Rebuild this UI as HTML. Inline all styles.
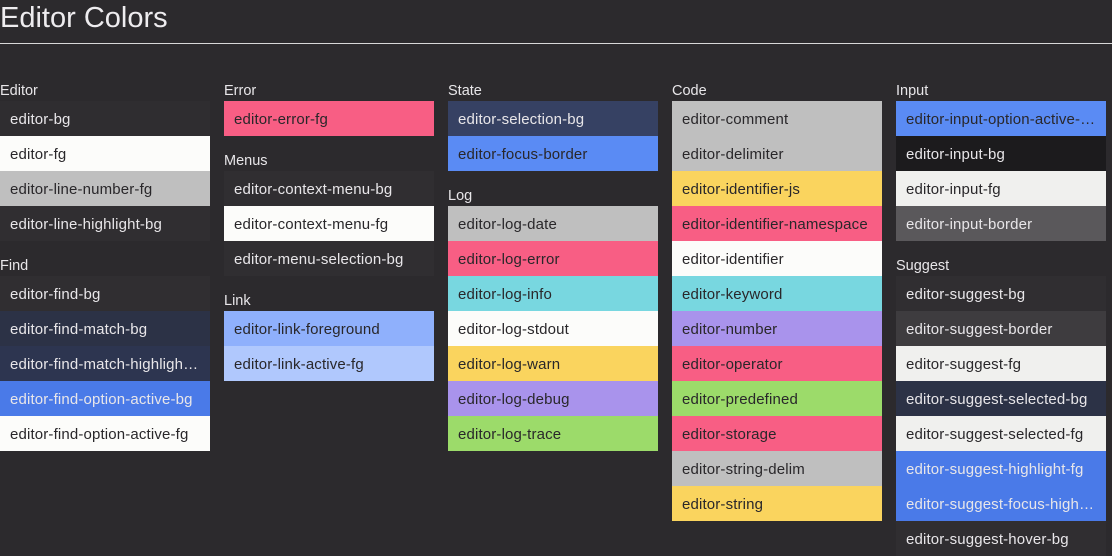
<!DOCTYPE html>
<html><head><style>
*{margin:0;padding:0;box-sizing:border-box}
body{width:1112px;height:556px;overflow:hidden;background:#2c2a2d;font-family:"Liberation Sans",sans-serif;color:#e8e6e9;position:relative}
h1{position:absolute;left:0;top:1px;font-weight:normal;font-size:29px;line-height:34px;color:#eeecef;letter-spacing:0}
.hr{position:absolute;left:0;top:43px;width:1112px;height:1px;background:#d8d8d8}
.col{position:absolute;top:77px;width:210px}
.h{height:24px;line-height:28px;font-size:14.5px;color:#e8e6e9}
.sec+.sec{margin-top:11px}
.r{height:35px;line-height:37px;padding-left:10px;padding-right:10px;font-size:15px;white-space:nowrap;overflow:hidden;text-overflow:ellipsis;letter-spacing:0.15px}
.d{color:#29272a}.l{color:#e8e6e9}
</style></head><body>
<h1>Editor Colors</h1><div class="hr"></div>

<div class="col" style="left:0">
<div class="sec"><div class="h">Editor</div>
<div class="r l" style="background:#2f2d30">editor-bg</div>
<div class="r d" style="background:#fcfcfa">editor-fg</div>
<div class="r d" style="background:#bfbfbf">editor-line-number-fg</div>
<div class="r l" style="background:#302e31">editor-line-highlight-bg</div></div>
<div class="sec"><div class="h">Find</div>
<div class="r l" style="background:#302e31">editor-find-bg</div>
<div class="r l" style="background:#2c3246">editor-find-match-bg</div>
<div class="r l" style="background:#2d3550">editor-find-match-highlight-bg</div>
<div class="r l" style="background:#4a7ae8">editor-find-option-active-bg</div>
<div class="r d" style="background:#fcfcfa">editor-find-option-active-fg</div></div>
</div>

<div class="col" style="left:224px">
<div class="sec"><div class="h">Error</div>
<div class="r d" style="background:#f85e84">editor-error-fg</div></div>
<div class="sec"><div class="h">Menus</div>
<div class="r l" style="background:#302e31">editor-context-menu-bg</div>
<div class="r d" style="background:#fcfcfa">editor-context-menu-fg</div>
<div class="r l" style="background:#302e31">editor-menu-selection-bg</div></div>
<div class="sec"><div class="h">Link</div>
<div class="r d" style="background:#8fb0fc">editor-link-foreground</div>
<div class="r d" style="background:#b0c8fd">editor-link-active-fg</div></div>
</div>

<div class="col" style="left:448px">
<div class="sec"><div class="h">State</div>
<div class="r l" style="background:#364163">editor-selection-bg</div>
<div class="r d" style="background:#5a8bf4">editor-focus-border</div></div>
<div class="sec"><div class="h">Log</div>
<div class="r d" style="background:#bfbfbf">editor-log-date</div>
<div class="r d" style="background:#f85e84">editor-log-error</div>
<div class="r d" style="background:#78d7e0">editor-log-info</div>
<div class="r d" style="background:#fcfcfa">editor-log-stdout</div>
<div class="r d" style="background:#fad45e">editor-log-warn</div>
<div class="r d" style="background:#a993ec">editor-log-debug</div>
<div class="r d" style="background:#9cdb6a">editor-log-trace</div></div>
</div>

<div class="col" style="left:672px">
<div class="sec"><div class="h">Code</div>
<div class="r d" style="background:#bfbfbf">editor-comment</div>
<div class="r d" style="background:#bfbfbf">editor-delimiter</div>
<div class="r d" style="background:#fad45e">editor-identifier-js</div>
<div class="r d" style="background:#f85e84">editor-identifier-namespace</div>
<div class="r d" style="background:#fcfcfa">editor-identifier</div>
<div class="r d" style="background:#78d7e0">editor-keyword</div>
<div class="r d" style="background:#a993ec">editor-number</div>
<div class="r d" style="background:#f85e84">editor-operator</div>
<div class="r d" style="background:#9cdb6a">editor-predefined</div>
<div class="r d" style="background:#f85e84">editor-storage</div>
<div class="r d" style="background:#bfbfbf">editor-string-delim</div>
<div class="r d" style="background:#fad45e">editor-string</div></div>
</div>

<div class="col" style="left:896px">
<div class="sec"><div class="h">Input</div>
<div class="r d" style="background:#5a8bf4">editor-input-option-active-bg</div>
<div class="r l" style="background:#1c1b1d">editor-input-bg</div>
<div class="r d" style="background:#f0f0ee">editor-input-fg</div>
<div class="r l" style="background:#5a585b">editor-input-border</div></div>
<div class="sec"><div class="h">Suggest</div>
<div class="r l" style="background:#302e31">editor-suggest-bg</div>
<div class="r l" style="background:#3e3c3f">editor-suggest-border</div>
<div class="r d" style="background:#f0f0ee">editor-suggest-fg</div>
<div class="r l" style="background:#2c3246">editor-suggest-selected-bg</div>
<div class="r d" style="background:#f0f0ee">editor-suggest-selected-fg</div>
<div class="r l" style="background:#4a7ae8">editor-suggest-highlight-fg</div>
<div class="r l" style="background:#4a7ae8">editor-suggest-focus-highlight-fg</div>
<div class="r l" style="background:#302e31">editor-suggest-hover-bg</div></div>
</div>
</body></html>
